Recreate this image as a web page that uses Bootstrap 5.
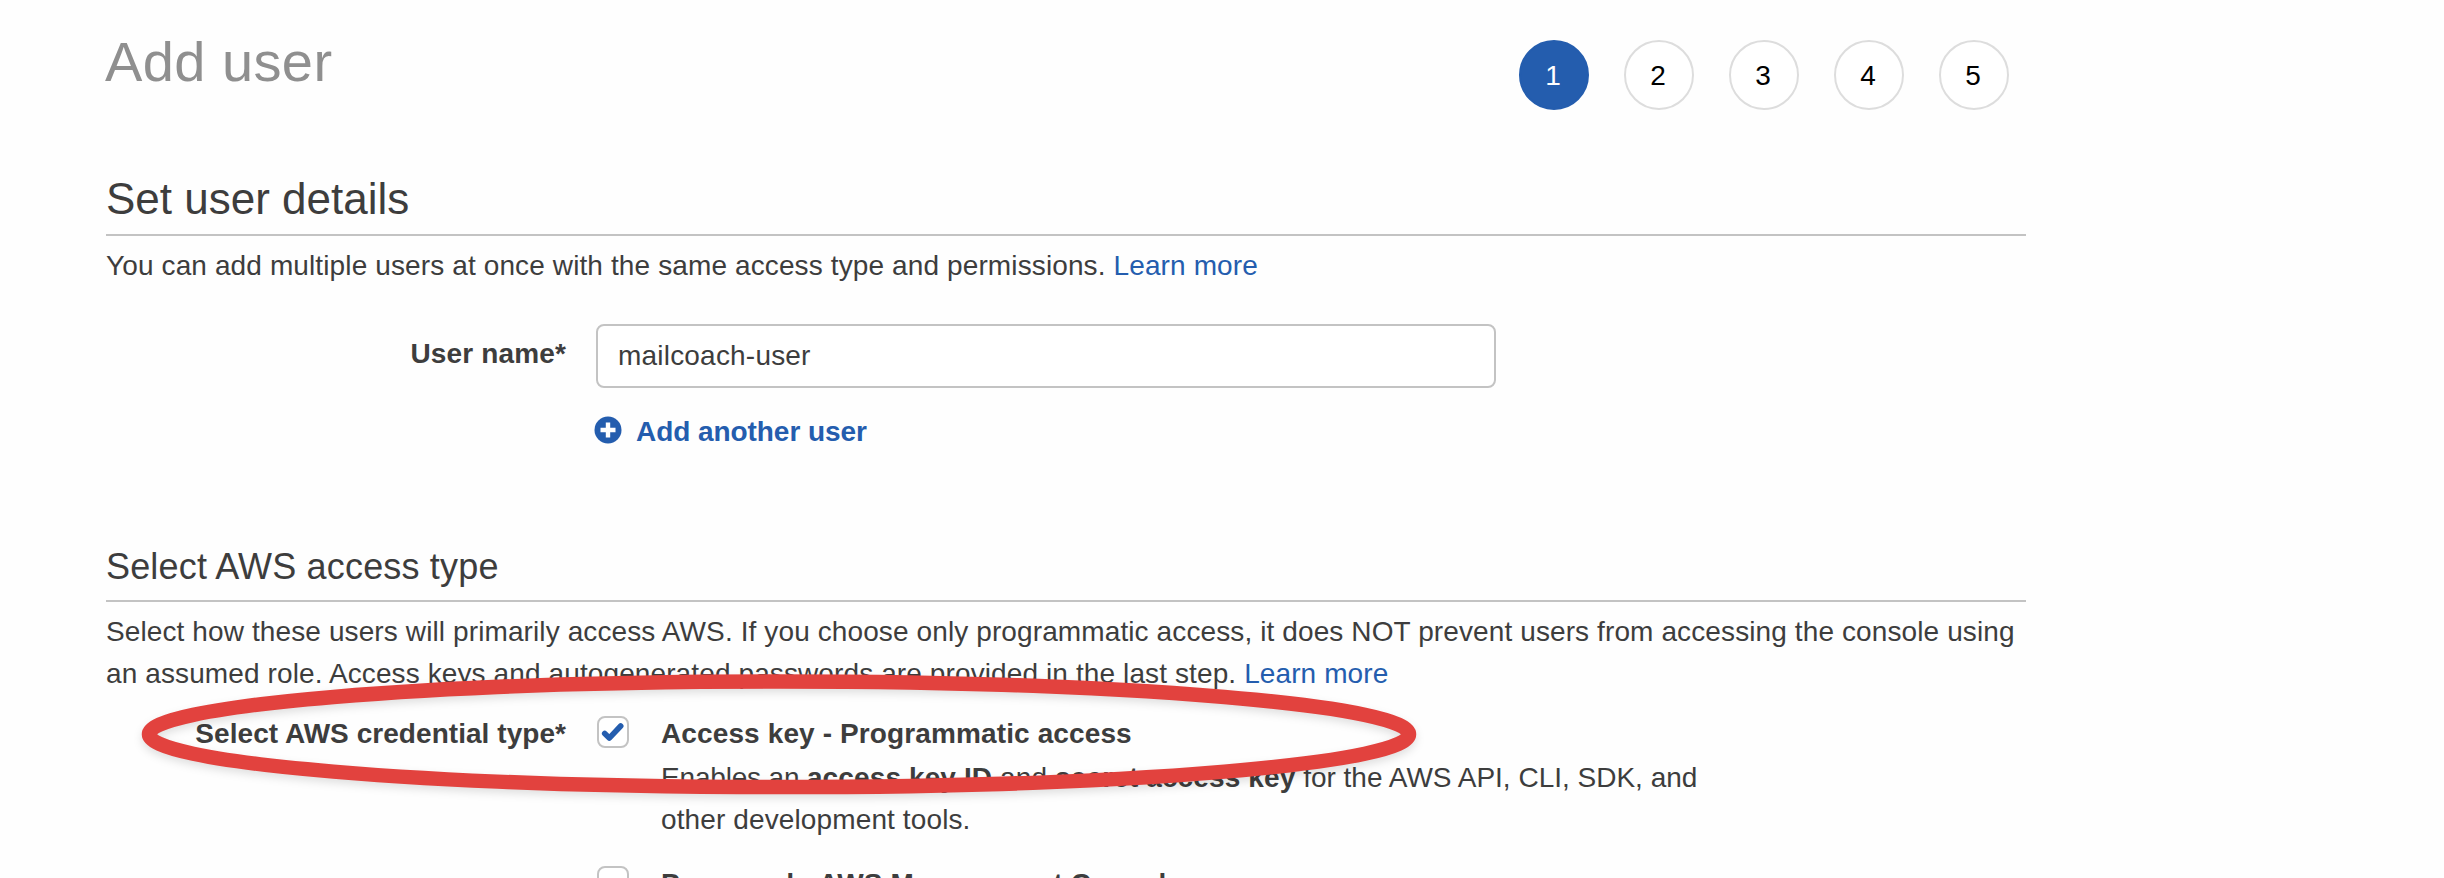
<!DOCTYPE html>
<html lang="en">
<head>
<meta charset="utf-8">
<meta name="viewport" content="width=device-width, initial-scale=1">
<title>Add user</title>
<link href="https://cdn.jsdelivr.net/npm/bootstrap@5.3.0/dist/css/bootstrap.min.css" rel="stylesheet">
<style>
body{font-family:"Liberation Sans",Arial,sans-serif;font-size:28px;line-height:42px;letter-spacing:.12px;color:#3d3d3d;background:#fefefe;height:878px;overflow:hidden}
.wizard{width:1920px;margin-left:106px}
.wizard-head{height:175px;padding:31px 17px 0 0}
.wizard-title{font-size:56px;line-height:62px;letter-spacing:.42px;color:#8f8f8f;font-weight:400;margin-left:-1px}
.steps{gap:35px;padding-top:9px}
.step{width:70px;height:70px;border:2px solid #ddd;color:#000;background:#fff;padding:1px 2px 0 0}
.step.current{background:#245dae;border-color:#245dae;color:#fff}
h2,h3{font-weight:400;border-bottom:2px solid #c3c3c3}
h2{font-size:44px;line-height:48px;height:61px;letter-spacing:0}
h3{font-size:36px;line-height:40px;height:55px;letter-spacing:.17px}
.intro{margin-top:9px}
.access .intro{letter-spacing:.11px}
a{color:#245dae;text-decoration:none}
.name-row{margin-top:37px}
.name-row .field-label{padding-top:9px;letter-spacing:.15px}
.field-label{width:460px;font-weight:700;text-align:right;letter-spacing:.05px;flex:none}
.field-body{margin-left:30px}
.name-input{width:900px;height:64px;border:2px solid #c3c3c3;border-radius:8px;padding:1px 20px;font-size:28px;letter-spacing:.2px;color:#3d3d3d;background:#fff;box-shadow:none}
.add-link{margin:23px 0 0 -2px;font-weight:700;gap:14px;letter-spacing:-.06px}
.add-link svg{margin-bottom:4px}
.access{margin-top:94px}
.credential-row{margin-top:18px}
.check{width:32px;height:32px;border:2px solid #c3c3c3;border-radius:8px;background:#fff;margin:3px 32px 0 1px}
.desc{margin-top:2px;width:1060px}
.option-next{margin-top:22px}
.annotation{position:absolute;left:130px;top:660px;filter:drop-shadow(0 4px 4px rgba(0,0,0,.12))}
</style>
</head>
<body>
<main class="wizard">
  <header class="wizard-head d-flex justify-content-between align-items-start">
    <h1 class="wizard-title mb-0">Add user</h1>
    <div class="steps d-flex">
      <span class="step current rounded-circle d-flex align-items-center justify-content-center">1</span>
      <span class="step rounded-circle d-flex align-items-center justify-content-center">2</span>
      <span class="step rounded-circle d-flex align-items-center justify-content-center">3</span>
      <span class="step rounded-circle d-flex align-items-center justify-content-center">4</span>
      <span class="step rounded-circle d-flex align-items-center justify-content-center">5</span>
    </div>
  </header>

  <section>
    <h2 class="mb-0">Set user details</h2>
    <p class="intro mb-0">You can add multiple users at once with the same access type and permissions. <a href="#">Learn more</a></p>
    <div class="name-row d-flex">
      <label class="field-label" for="username">User name*</label>
      <div class="field-body">
        <input id="username" class="form-control name-input" type="text" value="mailcoach-user">
        <a href="#" class="add-link d-flex align-items-center">
          <svg width="28" height="28" viewBox="0 0 28 28"><circle cx="14" cy="14" r="13.5" fill="#245dae"/><path d="M14 6.5v15M6.5 14h15" stroke="#fff" stroke-width="4.4"/></svg>
          Add another user
        </a>
      </div>
    </div>
  </section>

  <section class="access">
    <h3 class="mb-0">Select AWS access type</h3>
    <p class="intro mb-0">Select how these users will primarily access AWS. If you choose only programmatic access, it does NOT prevent users from accessing the console using<br>an assumed role. Access keys and autogenerated passwords are provided in the last step. <a href="#">Learn more</a></p>
    <div class="credential-row d-flex">
      <div class="field-label">Select AWS credential type*</div>
      <div class="field-body">
        <div class="d-flex align-items-start">
          <span class="check flex-shrink-0" role="checkbox" aria-checked="true"><svg class="d-block" width="28" height="28" viewBox="0 0 28 28"><path d="M5.7 15.5l4.6 4.6L21.7 8" fill="none" stroke="#245dae" stroke-width="5.6" stroke-linecap="round" stroke-linejoin="round"/></svg></span>
          <div>
            <strong class="d-block">Access key - Programmatic access</strong>
            <p class="desc mb-0"><span style="letter-spacing:-.18px">Enables an </span><strong>access key ID</strong> and <strong>secret access key</strong><span style="letter-spacing:0"> for the AWS API, CLI, SDK, and</span><br>other development tools.</p>
          </div>
        </div>
        <div class="option-next d-flex align-items-start">
          <span class="check flex-shrink-0" role="checkbox" aria-checked="false"></span>
          <strong>Password - AWS Management Console access</strong>
        </div>
      </div>
    </div>
  </section>
</main>
<svg class="annotation" width="1300" height="150" viewBox="130 660 1300 150"><ellipse cx="779" cy="734.3" rx="630" ry="52.8" fill="none" stroke="#e2423e" stroke-width="14.5"/></svg>
<script src="https://cdn.jsdelivr.net/npm/bootstrap@5.3.0/dist/js/bootstrap.bundle.min.js"></script>
</body>
</html>
